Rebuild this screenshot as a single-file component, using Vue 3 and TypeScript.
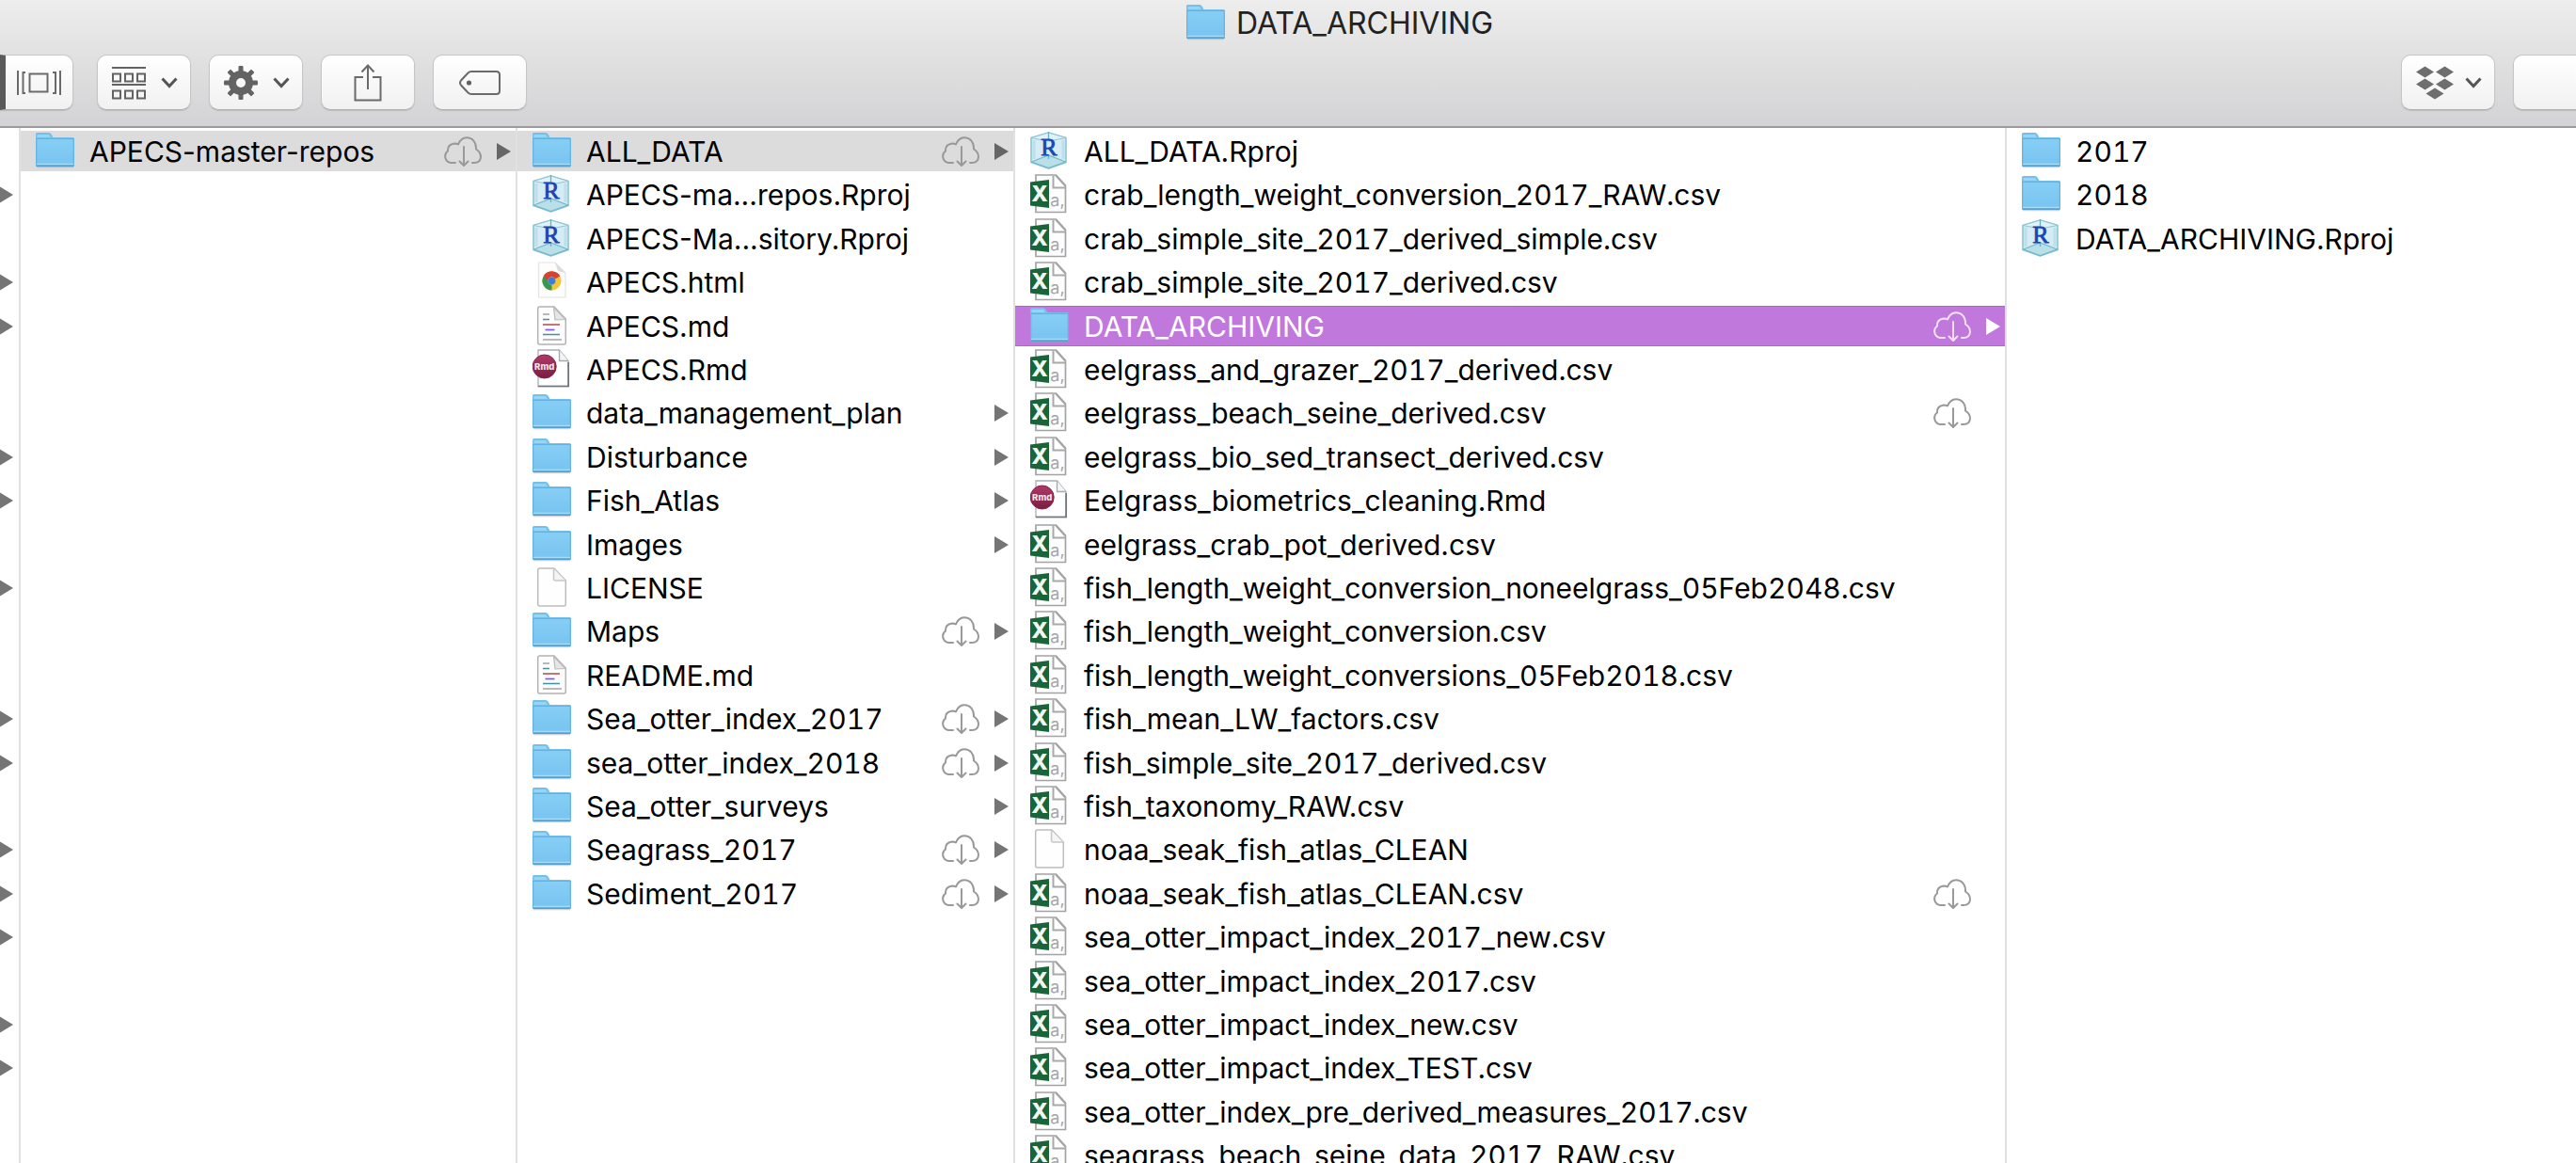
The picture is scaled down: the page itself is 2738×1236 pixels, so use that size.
<script setup lang="ts">
type Kind = 'folder' | 'rproj' | 'csv' | 'html' | 'md' | 'rmd' | 'blank'

interface Entry {
  name: string
  kind: Kind
  cloud?: boolean
  state?: 'path' | 'active'
}

const f = (name: string, kind: Kind, cloud = false, state?: 'path' | 'active'): Entry => ({ name, kind, cloud, state })

// Rows of the partly scrolled-off parent column that hold folders
const parentArrows: boolean[] = Array.from({ length: 24 }, (_, i) =>
  [1, 3, 4, 7, 8, 10, 13, 14, 16, 17, 18, 20, 21].includes(i),
)

const columns: Entry[][] = [
  [f('APECS-master-repos', 'folder', true, 'path')],
  [
    f('ALL_DATA', 'folder', true, 'path'),
    f('APECS-ma...repos.Rproj', 'rproj'),
    f('APECS-Ma...sitory.Rproj', 'rproj'),
    f('APECS.html', 'html'),
    f('APECS.md', 'md'),
    f('APECS.Rmd', 'rmd'),
    f('data_management_plan', 'folder'),
    f('Disturbance', 'folder'),
    f('Fish_Atlas', 'folder'),
    f('Images', 'folder'),
    f('LICENSE', 'blank'),
    f('Maps', 'folder', true),
    f('README.md', 'md'),
    f('Sea_otter_index_2017', 'folder', true),
    f('sea_otter_index_2018', 'folder', true),
    f('Sea_otter_surveys', 'folder'),
    f('Seagrass_2017', 'folder', true),
    f('Sediment_2017', 'folder', true),
  ],
  [
    f('ALL_DATA.Rproj', 'rproj'),
    f('crab_length_weight_conversion_2017_RAW.csv', 'csv'),
    f('crab_simple_site_2017_derived_simple.csv', 'csv'),
    f('crab_simple_site_2017_derived.csv', 'csv'),
    f('DATA_ARCHIVING', 'folder', true, 'active'),
    f('eelgrass_and_grazer_2017_derived.csv', 'csv'),
    f('eelgrass_beach_seine_derived.csv', 'csv', true),
    f('eelgrass_bio_sed_transect_derived.csv', 'csv'),
    f('Eelgrass_biometrics_cleaning.Rmd', 'rmd'),
    f('eelgrass_crab_pot_derived.csv', 'csv'),
    f('fish_length_weight_conversion_noneelgrass_05Feb2048.csv', 'csv'),
    f('fish_length_weight_conversion.csv', 'csv'),
    f('fish_length_weight_conversions_05Feb2018.csv', 'csv'),
    f('fish_mean_LW_factors.csv', 'csv'),
    f('fish_simple_site_2017_derived.csv', 'csv'),
    f('fish_taxonomy_RAW.csv', 'csv'),
    f('noaa_seak_fish_atlas_CLEAN', 'blank'),
    f('noaa_seak_fish_atlas_CLEAN.csv', 'csv', true),
    f('sea_otter_impact_index_2017_new.csv', 'csv'),
    f('sea_otter_impact_index_2017.csv', 'csv'),
    f('sea_otter_impact_index_new.csv', 'csv'),
    f('sea_otter_impact_index_TEST.csv', 'csv'),
    f('sea_otter_index_pre_derived_measures_2017.csv', 'csv'),
    f('seagrass_beach_seine_data_2017_RAW.csv', 'csv'),
  ],
  [f('2017', 'folder'), f('2018', 'folder'), f('DATA_ARCHIVING.Rproj', 'rproj')],
]

const hasArrow = (e: Entry, col: number): boolean => e.kind === 'folder' && col < 3

const hasDigits = (name: string): boolean => /\d/.test(name)

const gearTeeth: number[] = [0, 45, 90, 135, 180, 225, 270, 315]
</script>

<template>
  <div class="window">
    <svg class="defs" width="0" height="0" aria-hidden="true">
      <defs>
        <linearGradient id="folder-face" x1="0" y1="0" x2="0" y2="1">
          <stop offset="0" stop-color="#86cef5" />
          <stop offset="1" stop-color="#77c3f0" />
        </linearGradient>
        <linearGradient id="badge" x1="0" y1="0" x2="0" y2="1">
          <stop offset="0" stop-color="#b03a68" />
          <stop offset="1" stop-color="#7a1d40" />
        </linearGradient>
        <symbol id="icon-folder" viewBox="0 0 41 43">
          <path d="M1 38.500h39" stroke="#9aa4aa" stroke-opacity=".5" stroke-width="1.500" />
          <path d="M0 8V3.500Q0 2 1.500 2H14q1.500 0 2.500 1.500L18.500 7H39.500q1.500 0 1.500 1.500V20H0z" fill="#74c0ea" />
          <path d="M1.500 7V4h12.500l2 3z" fill="#96d5f6" />
          <path d="M0 8.500h41V36.500q0 1.500-1.500 1.500h-38Q0 38 0 36.500z" fill="url(#folder-face)" />
          <path d="M0 8.500h41" stroke="#62b2df" stroke-width="1.200" />
          <path d="M.7 8v28.500M40.300 8v28.500" stroke="#64b3df" stroke-width="1.200" />
          <path d="M1 35.300h39" stroke="#a6dcf8" stroke-width="1.200" />
          <path d="M.5 37.200h40" stroke="#579fca" stroke-width="1.600" />
        </symbol>
        <symbol id="icon-rproj" viewBox="0 0 41 43">
          <path d="M19.500 2 38 7.500V33.500L19.500 40 1 33.500V7.500z" fill="#d6ecf5" stroke="#84c2d0" stroke-width="1.500" stroke-linejoin="round" />
          <path d="M19.500 2 38 7.500 19.500 11 1 7.500z" fill="#e0f2f8" stroke="#8cc8d5" stroke-width="1" />
          <path d="M1.500 33 19.500 26 37.500 33 19.500 39.500z" fill="#b9dfe9" stroke="#74b9c9" stroke-width="1.200" />
          <path d="M4 10v20M35 10v20" stroke="#bcdfeb" stroke-width="3" />
          <path d="M19.500 1v8M19.500 25v5" stroke="#65b3c3" stroke-width="1.300" />
          <text x="20" y="26" text-anchor="middle" font-family="Liberation Serif, serif" font-size="26" fill="#1a45b4" stroke="#1a45b4" stroke-width=".8">R</text>
        </symbol>
        <symbol id="icon-blank" viewBox="0 0 41 43">
          <path d="M5.700 3q0-2 2-2H23L35.300 14V39q0 2-2 2H7.700q-2 0-2-2z" fill="#fefefe" stroke="#bdbdbd" stroke-width="1.500" />
          <path d="M22.500 1.500V12q0 2 2 2h10.500" fill="#f4f4f4" stroke="#c8c8c8" stroke-width="1.500" />
        </symbol>
        <symbol id="icon-md" viewBox="0 0 41 43">
          <path d="M5.700 3q0-2 2-2H23L35.300 14V39q0 2-2 2H7.700q-2 0-2-2z" fill="#fdfdfd" stroke="#b3b3b3" stroke-width="1.500" />
          <path d="M22.500 1.500 24 15 35 14.500z" fill="#e6e6e6" stroke="#bababa" stroke-width="1.200" />
          <g stroke-width="1.700">
            <path d="M11 9h7M11 36h20" stroke="#a2a2a2" />
            <path d="M11 14.500h7M11 30.500h18" stroke="#3d93a8" />
            <path d="M11 20h18" stroke="#c25a5e" />
            <path d="M13.500 25.500h10" stroke="#7a5cf0" />
          </g>
        </symbol>
        <symbol id="icon-html" viewBox="0 0 41 43">
          <path d="M6.500 1H24L35 12V38H6.500z" fill="#fdfdfd" stroke="#e3e3e3" stroke-width="1.200" />
          <path d="M24 1 35 12 27 10z" fill="#dcdcdc" />
          <circle cx="20.500" cy="20.500" r="10" fill="#f7c72f" />
          <path d="M20.500 20.500 11.800 15.500A10 10 0 0 1 29.200 15.500z" fill="#d9402f" />
          <path d="M20.500 20.500 11.800 15.500A10 10 0 0 0 20.500 30.500z" fill="#35984c" />
          <path d="M20.500 16h8.900a10 10 0 0 0-17.600-.5l4.700 5z" fill="#d9402f" />
          <circle cx="20.500" cy="20.500" r="4.200" fill="#8fb6e8" />
          <circle cx="20.500" cy="20.500" r="3.800" fill="#3a7ce0" />
        </symbol>
        <symbol id="icon-rmd" viewBox="0 0 41 43">
          <path d="M6 1H28.500L38 12.500V39.500H6z" fill="#fff" stroke="#aab0b6" stroke-width="1.300" />
          <path d="M28.500 1v11.500H38" fill="#f4f4f4" stroke="#a4aab0" stroke-width="1.300" />
          <path d="M6 39.500h32.200V14" fill="none" stroke="#6d757c" stroke-width="1.700" />
          <circle cx="12.700" cy="18.500" r="12.500" fill="url(#badge)" stroke="#7d2446" stroke-width="1" />
          <text x="12.700" y="21.500" text-anchor="middle" font-family="Inter, sans-serif" font-size="9.500" font-weight="800" fill="#f4e2ea">Rmd</text>
        </symbol>
        <symbol id="icon-csv" viewBox="0 0 41 43">
          <path d="M6 1H27.500L37.500 12V40.500H6z" fill="#fdfdfd" stroke="#a3a3a3" stroke-width="1.700" />
          <path d="M24.500 1.500V14.500H37" fill="#fff" stroke="#a9a9a9" stroke-width="2" />
          <path d="M27 1.500 37 12.500" stroke="#a3a3a3" stroke-width="1.700" />
          <text x="29" y="34" text-anchor="middle" font-family="Inter, sans-serif" font-size="18" fill="#a6a6a6">a,</text>
          <path d="M0 8.500 20 6V36L0 33.500z" fill="#19653a" />
          <text x="10" y="29" text-anchor="middle" font-family="Inter, sans-serif" font-size="23" font-weight="800" fill="#f2f8f4">X</text>
        </symbol>
        <symbol id="icon-cloud" viewBox="0 0 41 32">
          <g fill="none" stroke="currentColor" stroke-width="2" stroke-linecap="round" stroke-linejoin="round">
            <path d="M13 28H8A7 7 0 0 1 5 15.500Q4.500 8.500 12 7.500 14.500 7.500 16 8.500C18 3.500 21.500 1.200 25 1.200 31 1.200 35.500 6 35 13.500Q40 16.500 40 22 39.500 28 33 28H31" />
            <path d="M22 11V30M17.500 26.500 22 31l4.500-4.500" />
          </g>
        </symbol>
      </defs>
    </svg>

    <header class="chrome">
      <h1 class="title">
        <svg class="file-icon" aria-hidden="true"><use href="#icon-folder" /></svg>
        DATA_ARCHIVING
      </h1>
      <div class="toolbar">
        <button class="tool tool-view" type="button" aria-label="Cover flow view">
          <svg width="47" height="26" viewBox="0 0 47 26" fill="none" stroke="#6a6a6a" stroke-width="2" aria-hidden="true">
            <path d="M1 0v26M46 0v26M6.500 1v24M41 1v24M6 2h3M6 24h3M38 2h3M38 24h3" />
            <rect x="13.500" y="3.500" width="19" height="19" />
          </svg>
        </button>
        <button class="tool tool-menu" type="button" aria-label="Arrange items">
          <svg width="36" height="36" viewBox="0 0 36 36" fill="none" stroke="#636363" stroke-width="2" aria-hidden="true">
            <path d="M0 2h36M0 20h36" />
            <path d="M1 8.500h8v8H1zM14 8.500h8v8h-8zM27 8.500h8v8h-8zM1 26.500h8v8H1zM14 26.500h8v8h-8zM27 26.500h8v8h-8z" />
          </svg>
          <svg class="chevron" viewBox="0 0 18 12" aria-hidden="true"><path d="M1.500 1.500 9 9.500l7.500-8" /></svg>
        </button>
        <button class="tool tool-menu" type="button" aria-label="Actions">
          <svg width="36" height="36" viewBox="0 0 36 36" fill="#636363" aria-hidden="true">
            <rect v-for="a in gearTeeth" :key="a" x="15.500" y="0" width="5" height="8" rx="1" :transform="`rotate(${a} 18 18)`" />
            <circle cx="18" cy="18" r="9" fill="none" stroke="#636363" stroke-width="8" />
          </svg>
          <svg class="chevron" viewBox="0 0 18 12" aria-hidden="true"><path d="M1.500 1.500 9 9.500l7.500-8" /></svg>
        </button>
        <button class="tool" type="button" aria-label="Share">
          <svg width="30" height="40" viewBox="0 0 30 40" fill="none" stroke="#6a6a6a" stroke-width="2" aria-hidden="true">
            <path d="M10 14H1.500V38.500h27V14H20M15 1.500V27M8.500 8.500 15 1.500l6.500 7" />
          </svg>
        </button>
        <button class="tool" type="button" aria-label="Edit tags">
          <svg width="44" height="26" viewBox="0 0 44 26" aria-hidden="true">
            <path d="M13 1H39.500Q43 1 43 4.500v17Q43 25 39.500 25H13Q11 25 9.500 23.500L2 15.500Q0 13 2 10.500L9.500 2.500Q11 1 13 1z" fill="none" stroke="#6a6a6a" stroke-width="2" />
            <circle cx="10.500" cy="13" r="2.600" fill="#636363" />
          </svg>
        </button>
        <button class="tool tool-menu tool-end" type="button" aria-label="Dropbox">
          <svg width="40" height="36" viewBox="0 0 40 36" fill="#6e6e6e" aria-hidden="true">
            <path d="M9.500.500 19 6.500 9.500 12.500 0 6.500zM30.500.500 40 6.500 30.500 12.500 21 6.500zM9.500 13.500 19 19.500 9.500 25.500 0 19.500zM30.500 13.500 40 19.500 30.500 25.500 21 19.500zM20 23.500 29.500 29.500 20 35.500 10.500 29.500z" />
          </svg>
          <svg class="chevron" viewBox="0 0 18 12" aria-hidden="true"><path d="M1.500 1.500 9 9.500l7.500-8" /></svg>
        </button>
        <input class="search" type="search" aria-label="Search" />
      </div>
    </header>

    <main class="browser">
      <ul class="column parent" aria-label="Parent folder">
        <li v-for="(on, i) in parentArrows" :key="i" class="row">
          <svg v-if="on" class="arrow" viewBox="0 0 15 18" aria-hidden="true"><path d="M0 0 15 9 0 18z" /></svg>
        </li>
      </ul>
      <ul v-for="(items, c) in columns" :key="c" class="column">
        <li v-for="item in items" :key="item.name" class="row" :class="item.state">
          <svg class="file-icon" aria-hidden="true"><use :href="`#icon-${item.kind}`" /></svg>
          <span class="name" :class="{ dated: hasDigits(item.name) }">{{ item.name }}</span>
          <svg v-if="item.cloud" class="cloud" aria-hidden="true"><use href="#icon-cloud" /></svg>
          <svg v-if="hasArrow(item, c)" class="arrow" viewBox="0 0 15 18" aria-hidden="true"><path d="M0 0 15 9 0 18z" /></svg>
          <span v-else class="arrow"></span>
        </li>
      </ul>
    </main>
  </div>
</template>

<style>
body {
  margin: 0;
  overflow: hidden;
}
</style>

<style scoped>
.window {
  display: flex;
  flex-direction: column;
  height: 100vh;
  overflow: hidden;
  background: #fff;
  color: #000;
  font-family: Inter, "Liberation Sans", sans-serif;
  font-size: 30px;
}
.defs {
  position: absolute;
}
.chrome {
  flex: none;
  background: linear-gradient(#ededee, #e1e1e2 45%, #d3d2d4);
  border-bottom: 2px solid #9b9b9b;
}
.title {
  display: flex;
  align-items: center;
  justify-content: center;
  gap: 12px;
  height: 48px;
  margin: 0;
  padding-left: 110px;
  font-size: 32px;
  font-weight: 400;
  color: #222;
}
.toolbar {
  display: flex;
  gap: 19px;
  padding: 10px 0 17px;
}
.tool,
.search {
  box-sizing: border-box;
  height: 59px;
  margin: 0;
  padding: 0;
  border: 1px solid #c6c6c6;
  border-bottom-color: #b0b0b0;
  border-radius: 10px;
  background: linear-gradient(#fff, #f1f1f1);
  box-shadow: 0 1px 1px rgba(0, 0, 0, 0.12);
}
.tool {
  display: flex;
  align-items: center;
  justify-content: center;
  flex: none;
  width: 100px;
}
.tool-view {
  width: 78px;
  margin-right: 6px;
  border-left: 6px solid #5a5a5a;
  border-radius: 0 10px 10px 0;
}
.tool-menu {
  justify-content: space-between;
  padding: 0 13px 0 15px;
}
.tool-end {
  margin-left: auto;
}
.chevron {
  width: 18px;
  height: 12px;
  fill: none;
  stroke: #555;
  stroke-width: 3;
}
.search {
  width: 67px;
  border-right: 0;
  border-radius: 10px 0 0 10px;
}
.browser {
  flex: 1;
  display: grid;
  grid-template-columns: 22px 528fr 529fr 1054fr 605fr;
  min-height: 0;
}
.column {
  box-sizing: border-box;
  min-width: 0;
  margin: 0;
  padding: 3px 0 0;
  border-right: 2px solid #e1e1e1;
  list-style: none;
  overflow: hidden;
}
.column:last-child {
  border-right: 0;
}
.row {
  box-sizing: border-box;
  display: flex;
  align-items: center;
  height: 43px;
  margin-bottom: 3px;
  padding: 0 5px 0 16px;
}
.row:nth-child(5n + 2),
.row:nth-child(5n + 4) {
  margin-bottom: 4px;
}
.parent .row {
  justify-content: flex-end;
  padding: 0 6px 0 0;
}
.path {
  background: #dcdcdc;
}
.active {
  background: #c078dc;
  box-shadow: inset 0 1px #b463d4, inset 0 -1px #b463d4;
  color: #fff;
}
.file-icon {
  flex: none;
  width: 41px;
  height: 43px;
}
.name {
  flex: 1;
  min-width: 0;
  margin-left: 16px;
  white-space: nowrap;
}
.dated {
  font-variant-numeric: tabular-nums;
}
.cloud {
  flex: none;
  width: 41px;
  height: 32px;
  margin-right: 16px;
  color: #999;
}
.arrow {
  flex: none;
  width: 15px;
  height: 18px;
  fill: #757575;
}
.path .arrow {
  fill: #666;
}
.active .cloud {
  color: #f3e2f9;
}
.active .arrow {
  fill: #fff;
}
</style>
